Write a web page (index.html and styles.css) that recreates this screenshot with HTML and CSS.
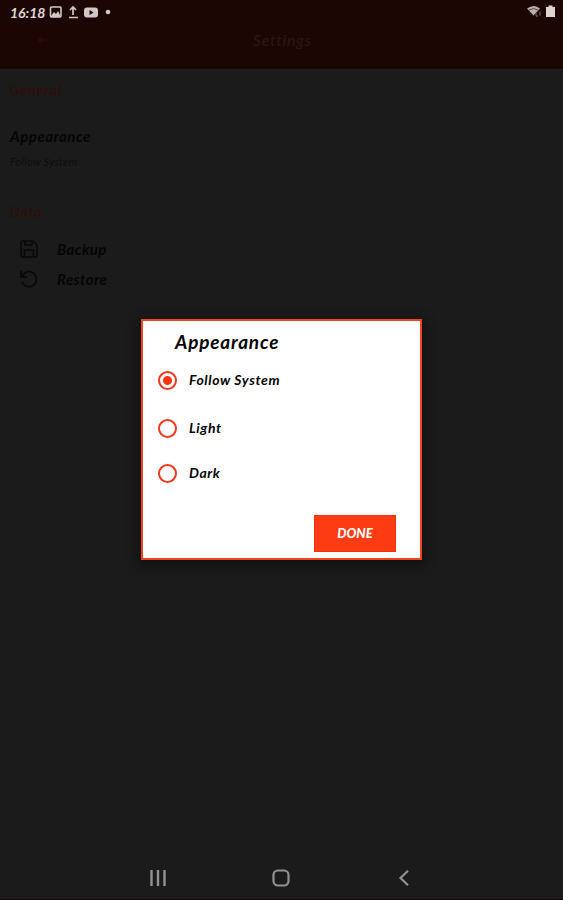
FILE: index.html
```html
<!DOCTYPE html>
<html lang="en">
<head>
    <meta charset="UTF-8">
    <meta name="viewport" content="width=device-width, initial-scale=1.0">
    <title>Settings</title>
    <link rel="stylesheet" href="styles.css">
</head>
<body>

<div class="header">
    <div class="status">
        <span class="time">16:18</span>
        <svg class="status-left" width="64" height="16" viewBox="0 0 64 16">
            <rect x="1.500" y="3" width="10.500" height="10" rx="1" fill="none" stroke="#d0c8c7" stroke-width="1.6"/>
            <path d="M2 12l3-4 2 2 2-3 2 4v2H2z" fill="#d0c8c7"/>
            <path d="M24 11V3M21 6l3-3 3 3M20 13.500h9" fill="none" stroke="#d0c8c7" stroke-width="1.7"/>
            <rect x="35" y="3.500" width="14" height="10" rx="3" fill="#d0c8c7"/>
            <path d="M40.500 6l4 2.500-4 2.500z" fill="#1c0604"/>
            <circle cx="59" cy="8" r="2.300" fill="#d0c8c7"/>
        </svg>
        <svg class="status-right" width="30" height="16" viewBox="0 0 30 16">
            <path d="M0 4.500q7-5 13 0l-6.500 7z" fill="#b9afae"/>
            <path d="M2 6q4.500-3 9 0" fill="none" stroke="#5a4846"/>
            <path d="M9 12v-3M9 12h2M13 7.500v4" fill="none" stroke="#665754" stroke-width="1.3"/>
            <path d="M19 3h2.500V1.500h4V3H28v10h-9z" fill="#dcd4d2"/>
        </svg>
    </div>
    <div class="appbar">
        <svg class="back" width="10" height="10" viewBox="0 0 10 10">
            <path d="M9 5H1M4 2L1 5l3 3" fill="none" stroke="#2b0f0b" stroke-width="1.4"/>
        </svg>
        <h1>Settings</h1>
    </div>
</div>

<div class="content">
    <div class="section">General</div>
    <div class="pref">
        <div class="pref-name">Appearance</div>
        <div class="pref-value">Follow System</div>
    </div>
    <div class="section">Data</div>
    <div class="actions">
        <div class="action">
            <svg width="18" height="18" viewBox="0 0 18 18" fill="none" stroke="#090909" stroke-width="1.6">
                <path d="M1 3q0-2 2-2h10l4 4v10q0 2-2 2H3q-2 0-2-2zM5 1v4h7V1M4.500 17v-7h9v7"/>
            </svg>
            <span>Backup</span>
        </div>
        <div class="action">
            <svg width="18" height="18" viewBox="0 0 18 18" fill="none" stroke="#090909" stroke-width="1.8">
                <path d="M2 6.500A7.500 7.500 0 1 1 2 12M1 1v6h6"/>
            </svg>
            <span>Restore</span>
        </div>
    </div>
</div>

<div class="navbar">
    <svg width="16" height="16" viewBox="0 0 16 16" fill="none" stroke="#929292" stroke-width="2.400">
        <path d="M1.500 0v16M8 0v16M14.500 0v16"/>
    </svg>
    <svg width="18" height="18" viewBox="0 0 18 18" fill="none" stroke="#929292" stroke-width="2.200">
        <rect x="1.500" y="1.500" width="15" height="15" rx="4.500"/>
    </svg>
    <svg width="16" height="16" viewBox="0 0 16 16" fill="none" stroke="#929292" stroke-width="2.200">
        <path d="M12 .8L4.500 8l7.500 7.200"/>
    </svg>
</div>

<div class="overlay">
    <div class="dialog">
        <h2>Appearance</h2>
        <div class="option first">
            <span class="radio checked"></span>
            <span class="label">Follow System</span>
        </div>
        <div class="option second">
            <span class="radio"></span>
            <span class="label">Light</span>
        </div>
        <div class="option">
            <span class="radio"></span>
            <span class="label">Dark</span>
        </div>
        <button class="done">DONE</button>
    </div>
</div>

</body>
</html>
```
FILE: styles.css
```css
* {
    box-sizing: border-box;
}
body {
    height: 900px;
    display: flex;
    flex-direction: column;
    margin: 0;
    padding: 0;
    overflow: hidden;
    background-color: #1b1b1b;
    color: #050505;
    font-family: Lato, "Liberation Sans", sans-serif;
    font-style: italic;
    font-weight: 500;
    border-bottom: 1px solid #170507;
}
svg {
    display: block;
    flex: none;
}
.header {
    height: 69px;
    background-color: #1c0604;
}
.status {
    height: 24px;
    display: flex;
    align-items: center;
    padding: 0 6px 0 10px;
}
.time {
    width: 39px;
    color: #e0d9d8;
    font-size: 14px;
    font-weight: bold;
}
.status-right {
    margin-left: auto;
}
.appbar {
    height: 32px;
    display: flex;
    align-items: center;
    padding-left: 38px;
}
.appbar h1 {
    margin: -2px 0 0 205px;
    color: #2b1714;
    font-size: 16px;
    font-weight: 500;
    letter-spacing: 0.6px;
}
.content {
    flex: 1;
    padding: 11px 10px 0;
}
.section {
    height: 20px;
    line-height: 20px;
    color: #350b06;
    font-size: 14px;
    font-weight: 500;
    letter-spacing: 1px;
}
.pref {
    height: 102px;
    padding-top: 26px;
}
.pref-name {
    line-height: 21px;
    font-size: 15px;
    font-weight: bold;
    letter-spacing: 0.5px;
}
.pref-value {
    margin-top: 6px;
    line-height: 18px;
    color: #0e0e0e;
    font-size: 11px;
    letter-spacing: 0.2px;
}
.actions {
    padding: 12px 0 0 10px;
}
.action {
    height: 30px;
    display: flex;
    align-items: center;
    gap: 19px;
    font-size: 15px;
    font-weight: bold;
    letter-spacing: 0.4px;
}
.navbar {
    height: 43px;
    display: flex;
    justify-content: space-between;
    align-items: center;
    padding: 0 151px 0 150px;
}
.overlay {
    position: absolute;
    top: 0;
    left: 0;
    width: 563px;
    height: 900px;
    padding: 319px 0 0 141px;
}
.dialog {
    width: 281px;
    height: 241px;
    display: flex;
    flex-direction: column;
    padding: 9px 24px 6px 15px;
    background-color: #fff;
    border: 2px solid #f4411e;
    box-shadow: 0 3px 10px 3px rgba(0, 0, 0, 0.4);
}
.dialog h2 {
    margin: 0 0 16px 17px;
    line-height: 24px;
    font-size: 19px;
    font-weight: bold;
    letter-spacing: 0.8px;
}
.option {
    height: 20px;
    display: flex;
    align-items: center;
    gap: 12px;
    font-size: 14px;
    font-weight: bold;
}
.label {
    padding-bottom: 1px;
    letter-spacing: 0.6px;
}
.first {
    margin-bottom: 28px;
}
.second {
    margin-bottom: 25px;
}
.radio {
    width: 19px;
    height: 19px;
    border: 2px solid #f0371c;
    border-radius: 50%;
}
.checked {
    background: radial-gradient(circle, #fa3512 0, #fa3512 4px, #fff 5px);
}
.done {
    width: 82px;
    height: 37px;
    margin: auto 0 0 auto;
    padding-bottom: 2px;
    background-color: #fe3c14;
    border: 1px solid #f3300f;
    color: #fff;
    font: italic 900 13px Lato, "Liberation Sans", sans-serif;
}
```
